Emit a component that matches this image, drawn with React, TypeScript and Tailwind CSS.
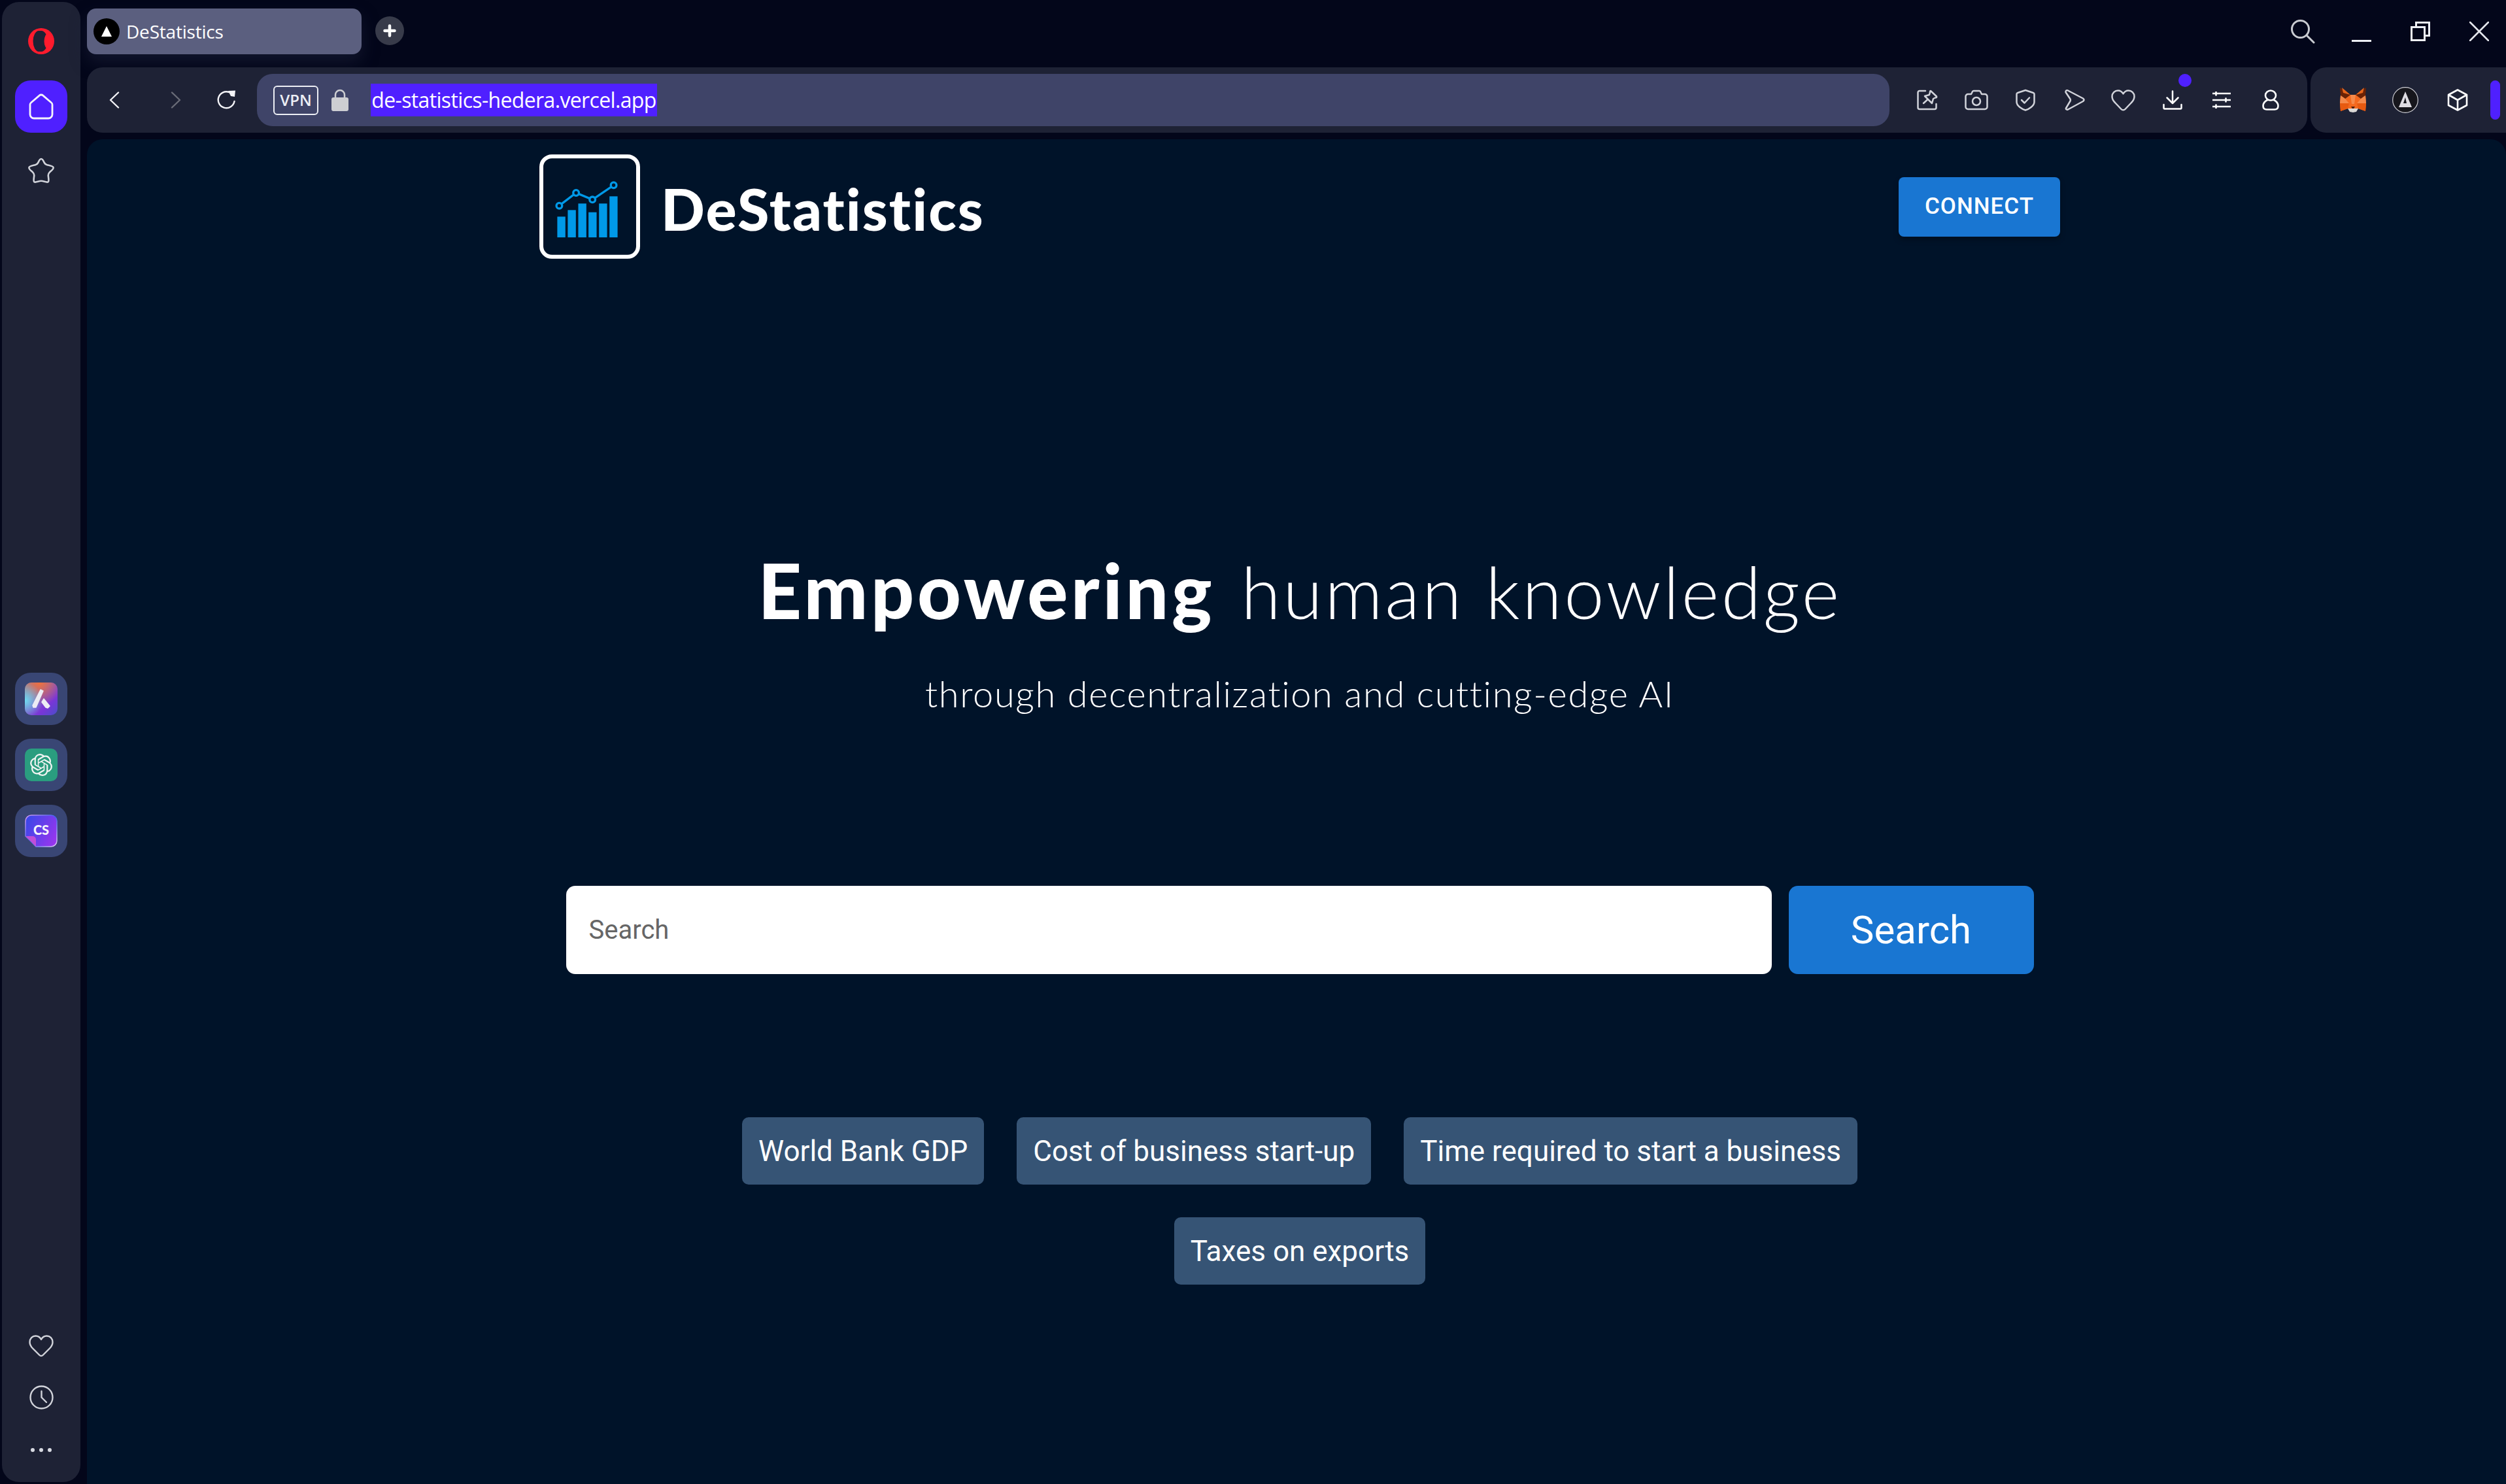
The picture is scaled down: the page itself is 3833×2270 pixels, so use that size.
import React from "react";
import { SiOpenai } from "react-icons/si";

const S = ({ w, h, vb, c = "#d1d3da", sw = 2.5, children, className = "" }: any) => (
  <svg width={w} height={h} viewBox={vb} fill="none" stroke={c} strokeWidth={sw} strokeLinecap="round" strokeLinejoin="round" className={`shrink-0 ${className}`}>
    {children}
  </svg>
);

const Opera = () => (
  <svg width="40" height="40" viewBox="0 0 40 40" className="shrink-0">
    <circle cx="20" cy="20" r="20" fill="#ff1b2d" />
    <ellipse cx="20" cy="20" rx="10" ry="16" fill="#1e2235" />
    <ellipse cx="16.5" cy="20" rx="9" ry="16" fill="#1e2235" />
    <ellipse cx="31" cy="20" rx="6.5" ry="12" fill="#ff1b2d" />
  </svg>
);

const Fox = () => (
  <svg width="40" height="38" viewBox="0 0 40 38" className="shrink-0">
    <polygon points="0,0 16,11 8,17 1,12" fill="#6b2205" />
    <polygon points="40,0 24,11 32,17 39,12" fill="#6b2205" />
    <polygon points="3,0 16,11 5,8" fill="#e8661c" />
    <polygon points="37,0 24,11 35,8" fill="#e8661c" />
    <polygon points="16,11 24,11 32,17 39,12 40,24 39,36 28,32 12,32 1,36 0,24 1,12 8,17" fill="#f4691f" />
    <polygon points="16,11 24,11 22,25 18,25" fill="#f58a4b" />
    <polygon points="1,12 8,17 14,24 0,24" fill="#f58a4b" />
    <polygon points="39,12 32,17 26,24 40,24" fill="#f58a4b" />
    <polygon points="0,24 14,24 12,32 1,36" fill="#e75a10" />
    <polygon points="40,24 26,24 28,32 39,36" fill="#e75a10" />
    <polygon points="12,32 28,32 25,37 20,38 15,37" fill="#dcd9d6" />
    <polygon points="17,29 23,29 21,32 19,32" fill="#4a1f10" />
  </svg>
);

const Logo = () => (
  <svg width="154" height="160" viewBox="75 48 461 478" className="shrink-0">
    <rect x="84" y="57" width="443" height="460" rx="48" fill="none" stroke="#fff" strokeWidth="18" />
    {[[157, 333], [205, 303], [253, 273], [300, 313], [348, 273], [396, 240]].map(([x, y]) => (
      <rect key={x} x={x} y={y} width="37" height={428 - y} fill="#0099e8" />
    ))}
    <polyline points="166,283 243,224 318,255 415,189" fill="none" stroke="#0099e8" strokeWidth="10" />
    {[[166, 283], [243, 224], [318, 255], [415, 189]].map(([x, y]) => (
      <circle key={x} cx={x} cy={y} r="13" fill="#001329" stroke="#0099e8" strokeWidth="10" />
    ))}
  </svg>
);

const Tile = ({ children }: { children: React.ReactNode }) => (
  <div className="flex h-[80px] w-[80px] items-center justify-center rounded-[24px] bg-[#394674]">{children}</div>
);

const Side = () => (
  <aside className="ml-[3px] mt-[3px] mb-[3px] flex w-[120px] shrink-0 flex-col items-center rounded-[26px] bg-[#1e2235]">
    <div className="mt-[40px]"><Opera /></div>
    <div className="mt-[40px] flex h-[80px] w-[80px] items-center justify-center rounded-[24px] bg-[#4f20ff]">
      <S w="38" h="40" vb="0 0 38 40" c="#f4f4fb" sw="2.8">
        <path d="M19 2 a4 4 0 0 1 2.8 1.1 L34.5 14 a4 4 0 0 1 1.5 3 V32 a6 6 0 0 1-6 6 H8 a6 6 0 0 1-6-6 V17 a4 4 0 0 1 1.5-3 L16.2 3.1 A4 4 0 0 1 19 2 Z" />
      </S>
    </div>
    <div className="mt-[38px]">
      <S w="42" h="40" vb="0 0 42 40" sw="2.6">
        <path d="M21 2 c2 0 3 2 4.6 5.6 c1 2.2 2 3 4.4 3.6 c5 1.2 9 1.6 9.6 4 c.6 2.6-3 4.6-6 7.6 c-1.6 1.6-2 2.8-1.8 5 c.3 4 1.6 8.6-.4 9.6 c-2.4 1.2-6.4-1.6-10.4-1.6 s-8 2.8-10.4 1.6 c-2-1 -.7-5.6-.4-9.6 c.2-2.2-.2-3.4-1.8-5 c-3-3-6.6-5-6-7.6 c.6-2.4 4.6-2.8 9.6-4 c2.4-.6 3.4-1.4 4.4-3.6 C18 4 19 2 21 2 Z" />
      </S>
    </div>
    <div className="mt-[748px] flex flex-col gap-[21px]">
      <Tile>
        <svg width="50" height="50" viewBox="0 0 50 50">
          <defs>
            <radialGradient id="a1" cx="0.45" cy="0" r="0.7"><stop offset="0" stopColor="#f0703c" /><stop offset="1" stopColor="#f0703c" stopOpacity="0" /></radialGradient>
            <radialGradient id="a2" cx="0" cy="0.55" r="0.55"><stop offset="0" stopColor="#6fdcf0" /><stop offset="1" stopColor="#6fdcf0" stopOpacity="0" /></radialGradient>
            <linearGradient id="a3" x1="0" y1="0" x2="1" y2="1"><stop offset="0" stopColor="#8a8aa8" /><stop offset="0.7" stopColor="#7a35d8" /><stop offset="1" stopColor="#4a4fc8" /></linearGradient>
          </defs>
          <rect width="50" height="50" rx="10" fill="url(#a3)" />
          <rect width="50" height="50" rx="10" fill="url(#a1)" />
          <rect width="50" height="50" rx="10" fill="url(#a2)" />
          <path d="M24 11 L28 13 L17 38 L13 38 L12 35 Z M29 25 L38 36 L35 39 L32 38 L26 30 Z" fill="#ececf4" stroke="#ececf4" strokeWidth="1.5" strokeLinejoin="round" />
        </svg>
      </Tile>
      <Tile>
        <div className="flex h-[50px] w-[50px] items-center justify-center rounded-[10px] bg-[#2a9d7f]">
          <SiOpenai size={34} color="#f0f4f2" />
        </div>
      </Tile>
      <Tile>
        <svg width="50" height="50" viewBox="0 0 50 50">
          <defs>
            <linearGradient id="c1" x1="0" y1="0.3" x2="1" y2="0.8"><stop offset="0" stopColor="#3f47e8" /><stop offset="1" stopColor="#9a35ee" /></linearGradient>
            <linearGradient id="c2" x1="0" y1="0" x2="1" y2="1"><stop offset="0" stopColor="#d89cf0" /><stop offset="0.5" stopColor="#3f60f0" /><stop offset="1" stopColor="#e6c8f4" /></linearGradient>
          </defs>
          <path d="M10 1 H40 a9 9 0 0 1 9 9 V40 a9 9 0 0 1-9 9 H17 L1 33 V10 a9 9 0 0 1 9-9 Z" fill="url(#c1)" stroke="url(#c2)" strokeWidth="1.5" />
          <path d="M1 33 H12 a5 5 0 0 1 5 5 V49 Z" fill="#c04fd8" />
          <text x="25" y="31" textAnchor="middle" fontFamily="Lato, sans-serif" fontWeight="900" fontSize="20" fill="#f4f4fb">CS</text>
        </svg>
      </Tile>
    </div>
    <div className="mt-auto flex flex-col items-center">
      <S w="38" h="34" vb="0 0 38 34" sw="2.4">
        <path d="M19 7 C17 3 14 1.5 10.5 1.5 C5.5 1.5 1.5 5.5 1.5 11 C1.5 15 3.5 18 6 20.5 L16.5 31 a3.5 3.5 0 0 0 5 0 L32 20.5 C34.5 18 36.5 15 36.5 11 C36.5 5.5 32.5 1.5 27.5 1.5 C24 1.5 21 3 19 7 Z" />
      </S>
      <div className="mt-[43px]">
        <S w="37" h="37" vb="0 0 37 37" sw="2.4">
          <circle cx="18.5" cy="18.5" r="17" />
          <path d="M18.5 9 V18.5 L26 26" />
        </S>
      </div>
      <div className="mb-[46px] mt-[59px] flex gap-[7px]">
        <span className="h-[6px] w-[6px] rounded-full bg-[#d8dae2]" />
        <span className="h-[6px] w-[6px] rounded-full bg-[#d8dae2]" />
        <span className="h-[6px] w-[6px] rounded-full bg-[#d8dae2]" />
      </div>
    </div>
  </aside>
);

const TabRow = () => (
  <div className="flex h-[103px] shrink-0 items-start">
    <div className="mt-[13px] flex h-[70px] w-[420px] items-center rounded-[14px] bg-[#5b5f7f] pl-[10px] shadow-[0_12px_24px_rgba(30,34,60,0.55)]">
      <div className="flex h-[40px] w-[40px] items-center justify-center rounded-full bg-black">
        <svg width="18" height="18" viewBox="0 0 18 18"><polygon points="9,1 17,17 1,17" fill="#fff" /></svg>
      </div>
      <span className="ml-[10px] font-['Open_Sans'] text-[28px] tracking-[-0.2px] text-white">DeStatistics</span>
    </div>
    <div className="ml-[21px] mt-[25px] flex h-[44px] w-[44px] items-center justify-center rounded-full bg-[#383b4a]">
      <svg width="20" height="20" viewBox="0 0 20 20" stroke="#fff" strokeWidth="4.5" strokeLinecap="round"><path d="M10 2.5V17.5M2.5 10H17.5" /></svg>
    </div>
    <div className="ml-auto mr-[26px] mt-[29px] flex items-center">
      <S w="38" h="38" vb="0 0 38 38" sw="3" c="#c9cbd1">
        <circle cx="15.5" cy="15.5" r="13" />
        <path d="M25 25 L36 36" />
      </S>
      <div className="ml-[56px] mt-[28px] h-[3px] w-[30px] bg-[#eef0f5]" />
      <svg width="30" height="30" viewBox="0 0 30 30" fill="none" stroke="#eef0f5" strokeWidth="3" className="ml-[60px]">
        <rect x="1.5" y="8.5" width="20" height="20" />
        <path d="M8.5 8.5 V1.5 H28.5 V21.5 H21.5" />
      </svg>
      <svg width="30" height="30" viewBox="0 0 30 30" fill="none" stroke="#e4e6ec" strokeWidth="2.6" strokeLinecap="round" className="ml-[60px]">
        <path d="M1 1 L29 29 M29 1 L1 29" />
      </svg>
    </div>
  </div>
);

const ToolIcons = () => (
  <div className="ml-[20px] flex items-center">
    <div className="flex w-[75px] justify-center">
      <S w="32" h="32" vb="0 0 32 32">
        <path d="M13 2 H4 a2.5 2.5 0 0 0-2.5 2.5 V27.5 A2.5 2.5 0 0 0 4 30 H27 a2.5 2.5 0 0 0 2.5-2.5 V22" />
        <path d="M21 2 L30 10.5 C30.5 11.5 30 12.5 28 12.5 L25 14 L23 21 L12 10 L19 8 L20 4 C20 2.5 20 2 21 2 Z" />
        <path d="M16 15.5 L10 21" />
      </S>
    </div>
    <div className="flex w-[75px] justify-center">
      <S w="36" h="32" vb="0 0 36 32">
        <path d="M5 7 H10 L12 3 A2 2 0 0 1 14 2 H22 A2 2 0 0 1 24 3 L26 7 H31 A3.5 3.5 0 0 1 34.5 10.5 V26.5 A3.5 3.5 0 0 1 31 30 H5 A3.5 3.5 0 0 1 1.5 26.5 V10.5 A3.5 3.5 0 0 1 5 7 Z" />
        <circle cx="18" cy="18" r="6" />
      </S>
    </div>
    <div className="flex w-[75px] justify-center">
      <S w="30" h="34" vb="0 0 30 34">
        <path d="M15 2 L27 6 a2 2 0 0 1 1.5 2 V20 C28.5 26 20 31 15 32.5 C10 31 1.5 26 1.5 20 V8 a2 2 0 0 1 1.5-2 Z" />
        <path d="M9 17 L13.5 21.5 L21 13.5" />
      </S>
    </div>
    <div className="flex w-[75px] justify-center">
      <S w="32" h="32" vb="0 0 32 32">
        <path d="M3 2 C3.5 1 5 1 6 1.5 L29 13.5 C31 15 31 16.5 29 18 L6 30.5 C4 31 2.5 30 3 28.5 L9.5 17.5 C10 16.5 10 15.5 9.5 14.5 L2.5 4 C2.5 3 2.5 2.5 3 2 Z" />
      </S>
    </div>
    <div className="flex w-[75px] justify-center">
      <S w="37" h="33" vb="0 0 37 33">
        <path d="M18.5 6.5 C16.5 3 14 1.5 10.5 1.5 C5.5 1.5 1.5 5.5 1.5 10.5 C1.5 14.5 3.5 17.5 6 20 L15.5 30 a4 4 0 0 0 6 0 L31 20 C33.5 17.5 35.5 14.5 35.5 10.5 C35.5 5.5 31.5 1.5 26.5 1.5 C23 1.5 20.5 3 18.5 6.5 Z" />
      </S>
    </div>
    <div className="relative flex w-[75px] justify-center">
      <S w="30" h="30" vb="0 0 30 30" c="#fff">
        <path d="M15 1.5 V19 M6.5 11.5 L15 20 L23.5 11.5" />
        <path d="M1.5 22 V27 a1.5 1.5 0 0 0 1.5 1.5 H27 a1.5 1.5 0 0 0 1.5-1.5 V22" />
      </S>
      <span className="absolute left-[47px] top-[-25px] h-[20px] w-[20px] rounded-full bg-[#4f20ff]" />
    </div>
    <div className="flex w-[75px] justify-center">
      <S w="30" h="26" vb="0 0 30 26" c="#fff" sw="2.6">
        <path d="M1 3 H29 M1 13 H29 M1 23 H29" strokeLinecap="butt" />
        <path d="M6.5 .5 V5.5 M21.5 10.5 V15.5 M6.5 20.5 V25.5" />
      </S>
    </div>
    <div className="flex w-[75px] justify-center">
      <S w="26" h="32" vb="0 0 26 32" c="#fff" sw="2.6">
        <ellipse cx="13" cy="9" rx="8" ry="7.5" />
        <path d="M8 16 C4 18 1.5 21 1.5 25 C1.5 29 4 30.5 7 30.5 H19 C22 30.5 24.5 29 24.5 25 C24.5 21 22 18 18 16" />
      </S>
    </div>
  </div>
);

const ToolRow = () => (
  <div className="flex h-[100px] shrink-0 gap-[5px]">
    <div className="flex w-[3396px] items-center rounded-[24px] bg-[#1e2235]">
      <div className="flex w-[260px] shrink-0 items-center">
        <S w="16" h="26" vb="0 0 16 26" c="#f4f4f8" sw="2.4" className="ml-[34px]"><path d="M14 1.5 L2 13 L14 24.5" /></S>
        <S w="16" h="26" vb="0 0 16 26" c="#6a6c78" sw="2.4" className="ml-[78px]"><path d="M2 1.5 L14 13 L2 24.5" /></S>
        <S w="30" h="30" vb="0 0 30 30" c="#f4f4f8" sw="2.4" className="ml-[54px]">
          <path d="M27.5 17 A12.5 12.5 0 1 1 19.5 3" />
          <polygon points="18,1 29,0.5 28,10 22,9" fill="#f4f4f8" stroke="none" />
        </S>
      </div>
      <div className="flex h-[80px] w-[2497px] shrink-0 items-center rounded-[24px] bg-[#3f4468]">
        <div className="ml-[25px] flex h-[45px] w-[69px] items-center justify-center rounded-[6px] border-[2px] border-[#eceef4] font-['Open_Sans'] text-[24px] font-semibold text-[#eceef4]">VPN</div>
        <svg width="26" height="34" viewBox="0 0 26 34" className="ml-[20px]" fill="none">
          <path d="M6 14 V9 a7 7 0 0 1 14 0 V14" stroke="#cdced2" strokeWidth="2.5" />
          <rect y="13" width="26" height="21" rx="3" fill="#cdced2" />
        </svg>
        <span className="ml-[34px] flex h-[50px] w-[438px] items-center justify-center whitespace-nowrap bg-[#4f20ff] font-['Open_Sans'] text-[32px] tracking-[-0.65px] text-white">de-statistics-hedera.vercel.app</span>
      </div>
      <ToolIcons />
    </div>
    <div className="flex min-w-0 flex-1 items-center rounded-l-[24px] bg-[#1e2235]">
      <div className="ml-[45px]"><Fox /></div>
      <svg width="40" height="40" viewBox="0 0 40 40" className="ml-[40px] shrink-0">
        <circle cx="20" cy="20" r="19.3" fill="#16161c" stroke="#d0d0d6" strokeWidth="1.2" />
        <path d="M20 7 L30 31 H11 L14 25 H22 L20 16 L15 31 H10 Z" fill="#dedce2" />
      </svg>
      <S w="32" h="34" vb="0 0 32 34" c="#fff" sw="2.6" className="ml-[44px]">
        <path d="M16 1.5 L30 9 V25 L16 32.5 L2 25 V9 Z M2 9 L16 17 L30 9 M16 17 V32.5" />
      </S>
      <div className="ml-[34px] h-[60px] w-[15px] rounded-full bg-[#4f20ff]" />
    </div>
  </div>
);

const chips = ["World Bank GDP", "Cost of business start-up", "Time required to start a business", "Taxes on exports"];

const Page = () => (
  <main className="mt-[10px] min-h-0 flex-1 rounded-t-[24px] bg-[#001329] pl-[692px]">
    <div className="flex w-[2326px] flex-col items-center">
      <header className="flex w-full items-start justify-between pt-[23px]">
        <div className="flex items-center">
          <Logo />
          <span className="ml-[32px] mt-[6px] font-['Lato'] text-[88px] font-black leading-none tracking-[2.1px] text-white">DeStatistics</span>
        </div>
        <button className="mt-[35px] h-[91px] w-[247px] rounded-[8px] bg-[#1976d2] font-['Roboto'] text-[35px] font-medium tracking-[1px] text-white shadow-[0_5px_8px_rgba(0,0,0,0.25)]">CONNECT</button>
      </header>
      <h1 className="mt-[432px] whitespace-nowrap font-['Lato'] leading-[150px] text-white">
        <span className="text-[116px] font-black tracking-[4.7px]">Empowering</span>
        <span className="ml-[40px] text-[110px] font-light tracking-[3.5px]">human knowledge</span>
      </h1>
      <p className="mt-[5px] whitespace-nowrap font-['Lato'] text-[56px] font-light leading-[80px] tracking-[1.6px] text-white">through decentralization and cutting-edge AI</p>
      <div className="mt-[254px] flex w-[2245px] gap-[26px]">
        <input placeholder="Search" className="h-[135px] min-w-0 flex-1 rounded-[14px] bg-white pl-[35px] font-['Roboto'] text-[40px] text-black outline-none placeholder:text-[#666]" />
        <button className="h-[135px] w-[375px] rounded-[14px] bg-[#1976d2] font-['Roboto'] text-[60px] text-white">Search</button>
      </div>
      <div className="mt-[219px] flex w-[1800px] flex-wrap justify-center gap-x-[50px] gap-y-[50px]">
        {chips.map((c) => (
          <div key={c} className="flex h-[103px] items-center rounded-[10px] bg-[#365475] px-[25px] font-['Roboto'] text-[44px] text-white">{c}</div>
        ))}
      </div>
    </div>
  </main>
);

export default function App() {
  return (
    <div className="flex h-screen w-screen overflow-hidden bg-[#03061a]">
      <Side />
      <div className="ml-[10px] flex min-w-0 flex-1 flex-col">
        <TabRow />
        <ToolRow />
        <Page />
      </div>
    </div>
  );
}
